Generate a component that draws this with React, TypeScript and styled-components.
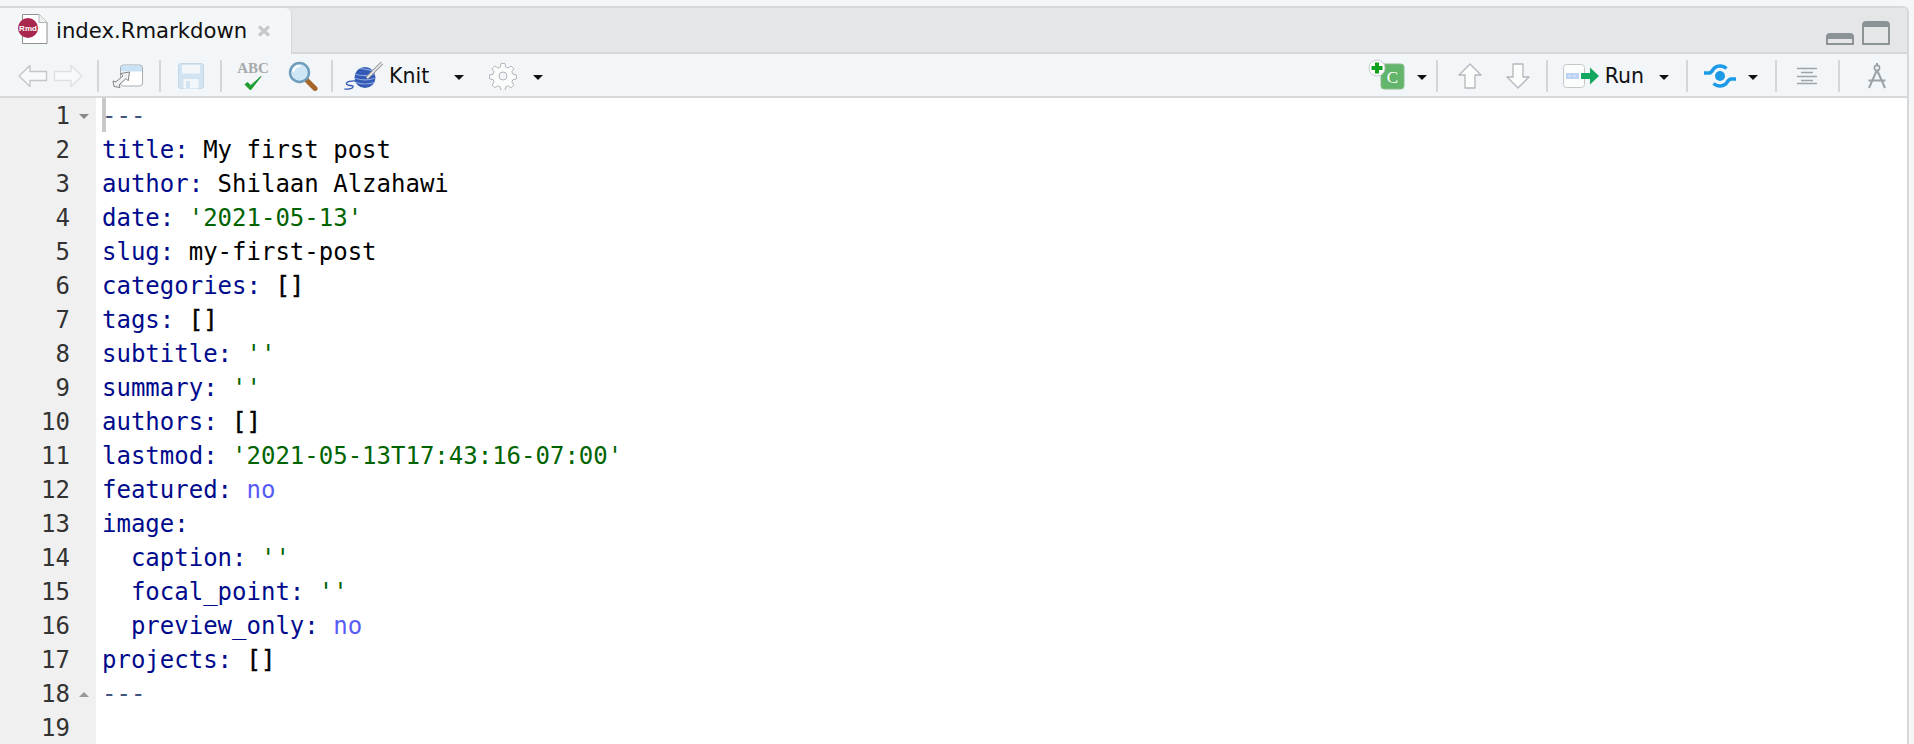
import styled, { createGlobalStyle } from "styled-components";

const GlobalStyle = createGlobalStyle`
  html, body {
    margin: 0;
    padding: 0;
    height: 744px;
    overflow: hidden;
    background: #f5f6f8;
  }
`;

type Kind = "key" | "text" | "str" | "num" | "dash" | "brk";
type Tok = [Kind, string];

const lines: Tok[][] = [
  [["dash", "---"]],
  [["key", "title:"], ["text", " My first post"]],
  [["key", "author:"], ["text", " Shilaan Alzahawi"]],
  [["key", "date:"], ["text", " "], ["str", "'2021-05-13'"]],
  [["key", "slug:"], ["text", " my-first-post"]],
  [["key", "categories:"], ["text", " "], ["brk", "[]"]],
  [["key", "tags:"], ["text", " "], ["brk", "[]"]],
  [["key", "subtitle:"], ["text", " "], ["str", "''"]],
  [["key", "summary:"], ["text", " "], ["str", "''"]],
  [["key", "authors:"], ["text", " "], ["brk", "[]"]],
  [["key", "lastmod:"], ["text", " "], ["str", "'2021-05-13T17:43:16-07:00'"]],
  [["key", "featured:"], ["text", " "], ["num", "no"]],
  [["key", "image:"]],
  [["text", "  "], ["key", "caption:"], ["text", " "], ["str", "''"]],
  [["text", "  "], ["key", "focal_point:"], ["text", " "], ["str", "''"]],
  [["text", "  "], ["key", "preview_only:"], ["text", " "], ["num", "no"]],
  [["key", "projects:"], ["text", " "], ["brk", "[]"]],
  [["dash", "---"]],
  [],
];

const tokenColors: Record<Kind, string> = {
  key: "#000a8c",
  text: "#000000",
  str: "#006400",
  num: "#585cf6",
  dash: "#3f5580",
  brk: "#000000",
};

const RmdIcon = () => (
  <svg width="30" height="32" viewBox="0 0 30 32">
    <path d="M4.500 1.500H21l8 8v21H4.500z" fill="#fff" stroke="#8e9092" />
    <path d="M21 1.500v8h8" fill="#f0f0f0" stroke="#b0b2b4" />
    <circle cx="10" cy="15" r="10" fill="#a9264f" />
    <text x="10" y="18" textAnchor="middle" fontFamily="'Liberation Sans', sans-serif" fontWeight="700" fontSize="8" fill="#fff">Rmd</text>
  </svg>
);

const CloseIcon = () => (
  <svg width="14" height="12" viewBox="0 0 14 12">
    <path d="M2 1.500 12 10.500M12 1.500 2 10.500" stroke="#c6c8ca" strokeWidth="3.200" />
  </svg>
);

const BackIcon = ({ flip }: { flip?: boolean }) => (
  <svg width="30" height="26" viewBox="0 0 30 26" style={flip ? { transform: "scaleX(-1)" } : undefined}>
    <path d="M1 13 12 2.500v6h16.500v9H12v6z" fill="#f8f9fa" stroke={flip ? "#dde1e3" : "#c3c7c9"} strokeWidth="1.400" strokeLinejoin="round" />
  </svg>
);

const PopoutIcon = () => (
  <svg width="32" height="24" viewBox="0 0 32 24">
    <rect x="8.500" y="1" width="22" height="21" rx="3" fill="#fff" stroke="#a7abae" />
    <path d="M9 4a3 3 0 0 1 3-2.500h15.500A3 3 0 0 1 30 4v3.500H9z" fill="#c9e2f6" />
    <path d="M2 22.500 1 17l3 .8 7-6-2.500-2.300 9-1.500-1.300 8.800-2.200-2.200-6.800 6.200.8 2.700z" fill="#eef0f1" stroke="#7f8385" strokeLinejoin="round" />
  </svg>
);

const SaveIcon = () => (
  <svg width="26" height="26" viewBox="0 0 26 26">
    <rect x="0.500" y="0.500" width="25" height="25" rx="2.500" fill="#d2e3f1" stroke="#c5d8e8" />
    <rect x="4" y="2" width="18" height="8.500" fill="#f4f7f9" />
    <rect x="5.500" y="16" width="15" height="9.500" fill="#f4f7f9" />
    <rect x="8" y="18" width="4" height="7.500" fill="#d2e3f1" />
  </svg>
);

const SpellIcon = () => (
  <SpellBox>
    <SpellText>ABC</SpellText>
    <svg width="18" height="16" viewBox="0 0 18 16">
      <path d="M1 9.500 6.500 15 17 1.500 6.800 10.500 3.500 7.500z" fill="#1f9d33" stroke="#1f9d33" strokeWidth="1" strokeLinejoin="round" />
    </svg>
  </SpellBox>
);

const SearchIcon = () => (
  <svg width="30" height="30" viewBox="0 0 30 30">
    <path d="M18 18.500 27 27.500" stroke="#a5662a" strokeWidth="5" strokeLinecap="round" />
    <circle cx="11.500" cy="11.500" r="9.500" fill="#cfe6f6" stroke="#6e9dbb" strokeWidth="2.400" />
    <path d="M5.500 10a6.500 6.500 0 0 1 6-5" fill="none" stroke="#fff" strokeWidth="2" strokeLinecap="round" />
  </svg>
);

const YarnIcon = () => (
  <svg width="40" height="30" viewBox="0 0 40 30">
    <circle cx="21" cy="16.500" r="10.500" fill="#3259b4" />
    <path d="M11 13c6 2 13 2 20 0M10.500 17c7 2.500 14 2.500 21 0M12 21.500c6 2 12 2 18 0M16 7.500c6 1 11 1 13 3" fill="none" stroke="#8aa4e0" strokeWidth="1.200" />
    <path d="M23 17 38 2" stroke="#8e9092" strokeWidth="3.400" />
    <path d="M23 17 38 2" stroke="#f4f4f4" strokeWidth="1.600" />
    <path d="M12 20C8 19.500 1.500 20.500 2.500 23 3.500 25.500 10 23.500 9 26 8.300 28 3 28.500.5 28" fill="none" stroke="#3259b4" strokeWidth="1.300" />
  </svg>
);

const GearIcon = () => (
  <svg width="28" height="28" viewBox="0 0 28 28">
    <path
      d="M12 1.500h4l.7 3.500 2.400 1 3-2 2.800 2.800-2 3 1 2.400 3.500.7v4l-3.500.7-1 2.400 2 3-2.800 2.800-3-2-2.400 1-.7 3.500h-4l-.7-3.500-2.400-1-3 2-2.800-2.800 2-3-1-2.400-3.500-.7v-4l3.500-.7 1-2.400-2-3L5.900 4l3 2 2.400-1z"
      fill="#fbfcfc"
      stroke="#b4b7ba"
      strokeWidth="1"
      strokeLinejoin="round"
    />
    <circle cx="14" cy="14" r="4" fill="#f3f6f8" stroke="#b4b7ba" />
  </svg>
);

const ChunkIcon = () => (
  <svg width="37" height="34" viewBox="0 0 37 34">
    <rect x="13" y="5" width="23" height="25" rx="3" fill="#62b56a" stroke="#8bbd8f" />
    <text x="24.500" y="24" textAnchor="middle" fontFamily="'Liberation Serif', serif" fontSize="17" fill="#fff">C</text>
    <circle cx="9" cy="9" r="8" fill="#fff" stroke="#c9cbcd" />
    <path d="M7 3.500h4v3.500h3.500v4H11v3.500H7V11H3.500V7H7z" fill="#12a01f" />
  </svg>
);

const UpIcon = ({ flip }: { flip?: boolean }) => (
  <svg width="24" height="26" viewBox="0 0 24 26" style={flip ? { transform: "scaleY(-1)" } : undefined}>
    <path d="M12 1 23 12h-6v13H7V12H1z" fill="#fbfcfc" stroke="#b4b7ba" strokeWidth="1.300" strokeLinejoin="round" />
  </svg>
);

const RunIcon = () => (
  <svg width="37" height="24" viewBox="0 0 37 24">
    <rect x="0.500" y="0.500" width="21" height="23" rx="3" fill="#fbfcfc" stroke="#c5c8ca" />
    <rect x="3" y="9" width="13" height="6" fill="#bcd4f2" />
    <path d="M5 12h3M10 12h3" stroke="#e6eefa" strokeWidth="1" />
    <path d="M18 9h9V3.500L36 12l-9 8.500V15h-9z" fill="#13a85f" />
  </svg>
);

const SyncIcon = () => (
  <svg width="32" height="24" viewBox="0 0 32 24">
    <path d="M0 9H5C8 9 8.500 5 11 3.500 14 1.300 19 1.500 22.500 4.500" fill="none" stroke="#1b9ae8" strokeWidth="3.600" />
    <path d="M32 15H27C24 15 23.500 19 21 20.500 18 22.700 13 22.500 9.500 19.500" fill="none" stroke="#1b9ae8" strokeWidth="3.600" />
    <circle cx="16" cy="12" r="5" fill="#1b9ae8" />
  </svg>
);

const AlignIcon = () => (
  <svg width="22" height="18" viewBox="0 0 22 18">
    <path d="M1 1.500h20M5 5.500h12M1 9.500h20M5 13.500h12M1 16.500h20" stroke="#9ea3a7" strokeWidth="1.500" />
  </svg>
);

const CompassIcon = () => (
  <svg width="20" height="26" viewBox="0 0 20 26">
    <circle cx="10" cy="5" r="2.600" fill="none" stroke="#9aa2a8" strokeWidth="1.600" />
    <path d="M10 7 2 25M10 7l8 18M1.500 17.500h17M10 0v2.500" stroke="#9aa2a8" strokeWidth="2" fill="none" />
  </svg>
);

const App = () => {
  return (
    <>
      <GlobalStyle />
      <Frame>
        <TabBar>
          <Tab>
            <RmdIcon />
            <TabName>index.Rmarkdown</TabName>
            <TabClose><CloseIcon /></TabClose>
          </Tab>
          <WindowButtons>
            <MinButton />
            <MaxButton />
          </WindowButtons>
        </TabBar>
        <Toolbar>
          <ToolGroup>
            <Tool $left={18}><BackIcon /></Tool>
            <Tool $left={5}><BackIcon flip /></Tool>
            <Separator $left={14} />
            <Tool $left={13}><PopoutIcon /></Tool>
            <Separator $left={15} />
            <Tool $left={17}><SaveIcon /></Tool>
            <Separator $left={16} />
            <Tool $left={14}><SpellIcon /></Tool>
            <Tool $left={18}><SearchIcon /></Tool>
            <Separator $left={13} />
            <Tool $left={11}><YarnIcon /></Tool>
            <ToolLabel $left={5}>Knit</ToolLabel>
            <Caret $left={25} />
            <Tool $left={25}><GearIcon /></Tool>
            <Caret $left={16} />
          </ToolGroup>
          <ToolGroup>
            <Tool><ChunkIcon /></Tool>
            <Caret $left={12} />
            <Separator $left={9} />
            <Tool $left={20}><UpIcon /></Tool>
            <Tool $left={24}><UpIcon flip /></Tool>
            <Separator $left={16} />
            <Tool $left={15}><RunIcon /></Tool>
            <ToolLabel $left={5}>Run</ToolLabel>
            <Caret $left={15} />
            <Separator $left={17} />
            <Tool $left={16}><SyncIcon /></Tool>
            <Caret $left={12} />
            <Separator $left={17} />
            <Tool $left={19}><AlignIcon /></Tool>
            <Separator $left={20} />
            <Tool $left={27}><CompassIcon /></Tool>
          </ToolGroup>
        </Toolbar>
        <Editor>
          <Gutter>
            {lines.map((_, i) => (
              <GutterRow key={i}>
                <LineNo>{i + 1}</LineNo>
                <FoldMark>{i === 0 ? <FoldDown /> : i === 17 ? <FoldUp /> : null}</FoldMark>
              </GutterRow>
            ))}
          </Gutter>
          <Code>
            <Cursor />
            {lines.map((toks, i) => (
              <CodeRow key={i}>
                {toks.map(([kind, text], j) => (
                  <Token key={j} $kind={kind}>{text}</Token>
                ))}
              </CodeRow>
            ))}
          </Code>
        </Editor>
      </Frame>
    </>
  );
};

const Frame = styled.div`
  margin: 6px 5px 0 0;
  height: 738px;
  box-sizing: border-box;
  border-top: 2px solid #d6d8da;
  border-right: 2px solid #d6d8da;
  border-top-right-radius: 6px;
  overflow: hidden;
  display: flex;
  flex-direction: column;
  background: #fff;
`;

const TabBar = styled.div`
  height: 44px;
  flex: none;
  display: flex;
  justify-content: space-between;
  background: #e5e6e8;
  border-bottom: 2px solid #d6d8da;
`;

const Tab = styled.div`
  width: 292px;
  height: 46px;
  box-sizing: border-box;
  display: flex;
  align-items: center;
  padding: 0 0 4px 18px;
  background: #f4f7f8;
  border-right: 1px solid #d6d8da;
  border-top-right-radius: 6px;
`;

const TabName = styled.span`
  margin: 2px 0 0 8px;
  font-family: "DejaVu Sans", sans-serif;
  font-size: 21.200px;
  color: #111;
`;

const TabClose = styled.span`
  display: flex;
  margin: 3px 0 0 10px;
`;

const WindowButtons = styled.div`
  display: flex;
  align-items: flex-end;
  gap: 8px;
  padding: 0 17px 7px 0;
`;

const MinButton = styled.div`
  width: 28px;
  height: 12px;
  box-sizing: border-box;
  border: 2px solid #8c9396;
  border-top-width: 6px;
  border-radius: 4px 4px 0 0;
`;

const MaxButton = styled.div`
  width: 28px;
  height: 24px;
  box-sizing: border-box;
  border: 2px solid #8c9396;
  border-top-width: 6px;
  border-radius: 4px 4px 0 0;
`;

const Toolbar = styled.div`
  height: 42px;
  flex: none;
  display: flex;
  align-items: center;
  justify-content: space-between;
  padding-right: 20px;
  background: #f3f6f8;
  border-bottom: 2px solid #d6d8da;
`;

const ToolGroup = styled.div`
  display: flex;
  align-items: center;
  height: 100%;
  padding-top: 2px;
  box-sizing: border-box;
`;

const Tool = styled.span<{ $left?: number }>`
  display: flex;
  flex: none;
  margin-left: ${(p) => p.$left ?? 0}px;
`;

const ToolLabel = styled.span<{ $left?: number }>`
  margin-left: ${(p) => p.$left ?? 0}px;
  font-family: "DejaVu Sans", sans-serif;
  font-size: 20.500px;
  color: #111;
`;

const Caret = styled.span<{ $left?: number }>`
  flex: none;
  margin: 3px 0 0 ${(p) => p.$left ?? 0}px;
  width: 0;
  height: 0;
  border-left: 5px solid transparent;
  border-right: 5px solid transparent;
  border-top: 5px solid #111;
`;

const Separator = styled.span<{ $left?: number }>`
  flex: none;
  margin-left: ${(p) => p.$left ?? 0}px;
  width: 2px;
  height: 32px;
  background: #d4d7d9;
`;

const SpellBox = styled.span`
  display: flex;
  flex-direction: column;
  align-items: center;
  width: 34px;
  line-height: 13px;
`;

const SpellText = styled.span`
  font-family: "Liberation Serif", serif;
  font-weight: 700;
  font-size: 15px;
  color: #a7a9ab;
`;

const Editor = styled.div`
  flex: 1;
  display: flex;
  min-height: 0;
  font-family: "DejaVu Sans Mono", monospace;
  font-size: 24px;
`;

const Gutter = styled.div`
  flex: none;
  width: 96px;
  padding-top: 1px;
  background: #f0f0f0;
`;

const GutterRow = styled.div`
  display: flex;
  justify-content: flex-end;
  align-items: center;
  height: 34px;
  padding-right: 7px;
`;

const LineNo = styled.span`
  color: #333;
`;

const FoldMark = styled.span`
  display: flex;
  justify-content: flex-end;
  width: 19px;
`;

const FoldDown = styled.span`
  width: 0;
  height: 0;
  border-left: 5px solid transparent;
  border-right: 5px solid transparent;
  border-top: 5px solid #888;
`;

const FoldUp = styled(FoldDown)`
  border-top: 0;
  border-bottom: 5px solid #999;
`;

const Code = styled.div`
  position: relative;
  flex: 1;
  padding: 1px 0 0 6px;
`;

const Cursor = styled.div`
  position: absolute;
  top: 0;
  left: 6px;
  width: 4px;
  height: 34px;
  background: #c8c8c8;
`;

const CodeRow = styled.div`
  position: relative;
  height: 34px;
  line-height: 34px;
  white-space: pre;
`;

const Token = styled.span<{ $kind: Kind }>`
  color: ${(p) => tokenColors[p.$kind]};
  -webkit-text-stroke: ${(p) => (p.$kind === "brk" ? "0.4px #000" : "0")};
`;

export default App;
